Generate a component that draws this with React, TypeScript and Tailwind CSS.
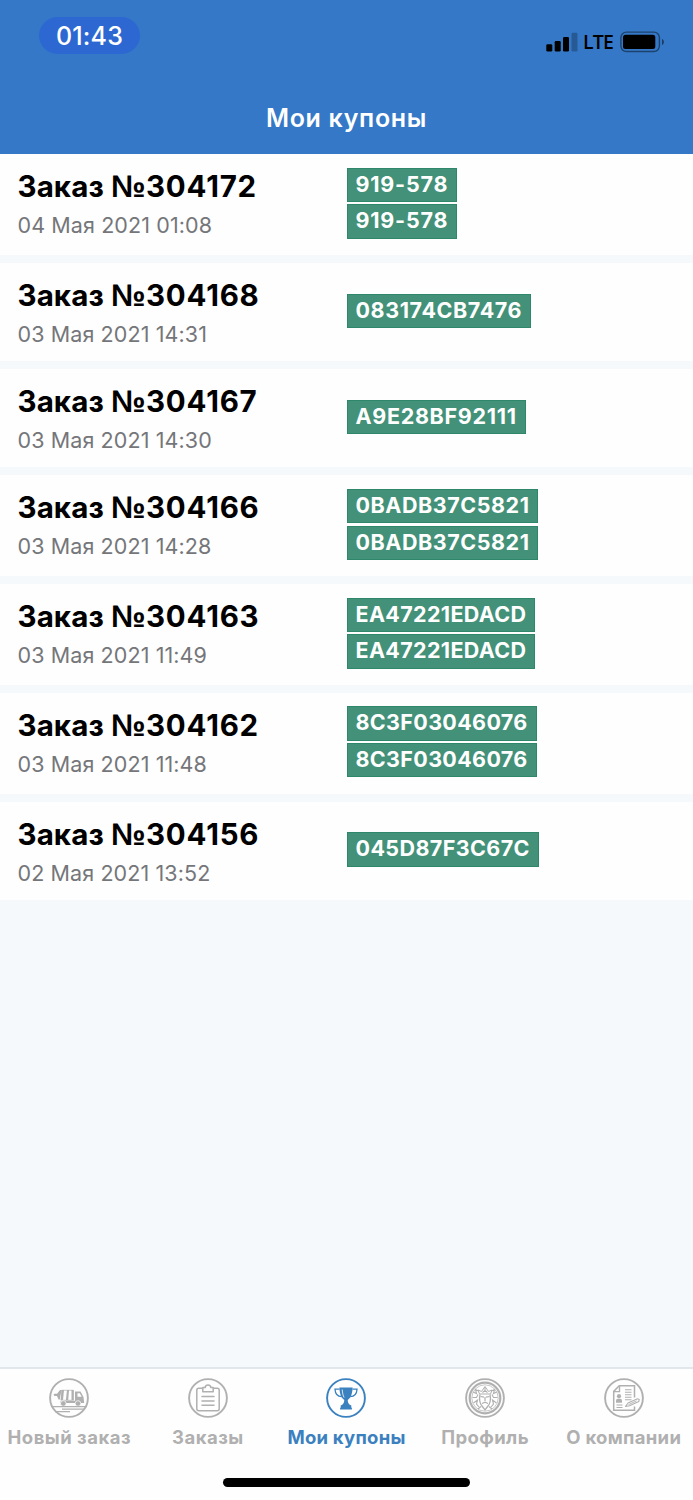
import type { ReactNode } from "react";

type Order = {
  id: string;
  date: string;
  coupons: string[];
  spacing: string;
};

const orders: Order[] = [
  { id: "304172", date: "04 Мая 2021 01:08", coupons: ["919-578", "919-578"], spacing: "tracking-[0.8px]" },
  { id: "304168", date: "03 Мая 2021 14:31", coupons: ["083174CB7476"], spacing: "tracking-[0.6px]" },
  { id: "304167", date: "03 Мая 2021 14:30", coupons: ["A9E28BF92111"], spacing: "tracking-[0.7px]" },
  { id: "304166", date: "03 Мая 2021 14:28", coupons: ["0BADB37C5821", "0BADB37C5821"], spacing: "tracking-[0.55px]" },
  { id: "304163", date: "03 Мая 2021 11:49", coupons: ["EA47221EDACD", "EA47221EDACD"], spacing: "tracking-[0.35px]" },
  { id: "304162", date: "03 Мая 2021 11:48", coupons: ["8C3F03046076", "8C3F03046076"], spacing: "tracking-[0.35px]" },
  { id: "304156", date: "02 Мая 2021 13:52", coupons: ["045D87F3C67C"], spacing: "tracking-[0.4px]" },
];

const RoundIcon = ({ children }: { children: ReactNode }) => (
  <svg width="40" height="40" viewBox="0 0 40 40" fill="none" stroke="currentColor" strokeWidth="1">
    <circle cx="20" cy="20" r="18.9" strokeWidth="1.9" />
    {children}
  </svg>
);

const TruckIcon = () => (
  <RoundIcon>
    <path d="M4.500 16.500l1-.8h2.500l3-3.700h1.500l-1.700 9.500h-1.300l-1.500-3.500H5.500z" fill="currentColor" stroke="none" />
    <path d="M12.500 12.300h12v10h-12z" strokeWidth="0.700" />
    <path d="M13 12h2l-1 10h-2.500zM18 12h2l-.8 10h-2.300zM22.500 12h2v10h-2z" fill="currentColor" stroke="none" />
    <path d="M26 13.500h5.500l3 5.500.7 6H11.500v-2.300H26z" fill="currentColor" stroke="none" />
    <path d="M28.500 15.300h2.200l2 3.500h-4.200z" fill="#fff" stroke="none" />
    <circle cx="14.300" cy="25.500" r="2.800" fill="currentColor" stroke="#fff" strokeWidth="0.700" />
    <circle cx="29" cy="25.500" r="2.800" fill="currentColor" stroke="#fff" strokeWidth="0.700" />
    <path d="M2.500 28.600h35M13 31.200h23M6 33.600h15" strokeWidth="1.300" />
  </RoundIcon>
);

const ClipboardIcon = () => (
  <RoundIcon>
    <path d="M14.500 10.200h-3.700a2 2 0 0 0-2 2v18.600a2 2 0 0 0 2 2h18.400a2 2 0 0 0 2-2V12.200a2 2 0 0 0-2-2h-3.700" strokeWidth="1.500" />
    <path d="M14.800 13.800V9.500h2.300c.6-3.500 5.200-3.500 5.800 0h2.300v4.300z" strokeWidth="1.500" strokeLinejoin="round" />
    <path d="M14 18.600h12M14 23h12M14 27.300h12" strokeWidth="1.500" strokeLinecap="round" />
  </RoundIcon>
);

const TrophyIcon = () => (
  <RoundIcon>
    <path
      d="M13.400 9.500h13.200c-.2 6-1.700 10.500-4.900 12.400.1 3 1.200 4.400 3.600 5.600v2.200h.6v1.800H14.100v-1.800h.6v-2.200c2.400-1.200 3.500-2.600 3.600-5.600-3.200-1.900-4.700-6.400-4.900-12.400z"
      fill="currentColor"
      stroke="none"
    />
    <path d="M13.500 11.200H9c.2 4.500 2.800 7.300 6.800 7.500M26.500 11.200H31c-.2 4.500-2.800 7.300-6.800 7.500" strokeWidth="1.300" />
    <path d="M16.200 11.500c.3 3.500.8 6 1.900 8" stroke="#fff" strokeWidth="0.800" />
  </RoundIcon>
);

const EmblemIcon = () => (
  <RoundIcon>
    <circle cx="20" cy="20" r="15.300" strokeWidth="2.200" />
    <circle cx="20" cy="20" r="13.200" strokeWidth="0.700" />
    <path d="M14.500 16l-1.500-4 3.500 1.500L20 8.500l3.500 5L27 12l-1.500 4z" strokeWidth="1" />
    <path d="M20 9v5M17.500 14.500l2.500-2 2.500 2" strokeWidth="1.100" />
    <path d="M15 16.500c-1 5-.2 9 2 11.500l3 4 3-4c2.200-2.500 3-6.500 2-11.500" strokeWidth="1.300" />
    <path d="M15.500 18.500l3.500.7M24.500 18.500l-3.500.7M20 19v4M17 25.500l3-1.300 3 1.300" strokeWidth="1.200" />
    <path d="M8 14l3.500 1.500-1-4 3 1.500M32 14l-3.500 1.500 1-4-3 1.500M7.500 19.500h4l1.500-3M32.500 19.500h-4l-1.500-3M8.500 25l4-3-1 4 2.500 3M31.500 25l-4-3 1 4-2.500 3M13 31l3-2.500M27 31l-3-2.500" strokeWidth="1.100" />
  </RoundIcon>
);

const DocumentIcon = () => (
  <RoundIcon>
    <path d="M30.500 19.500V7.800H15.200L9.700 13.400v18.900h20.800V28.500" strokeWidth="1.500" />
    <path d="M15.500 8v5.600H10" strokeWidth="1.400" />
    <circle cx="15" cy="18.200" r="2.100" fill="currentColor" stroke="none" />
    <path d="M12 24.800v-2.300q0-1.700 1.800-1.700h2.400q1.800 0 1.800 1.700v2.300z" fill="currentColor" stroke="none" />
    <path d="M21 11.800h6.500M21 14.300h6.500M21 16.800h6.500M21 19.300h6.500M21 21.800h6.500M12.500 27h6M12.500 29.500h6" strokeWidth="1.100" />
    <path d="M21.500 28.500l2.500-3.500 9.500-4.200 1.800.6-.5 2-9.300 4.300z" fill="#fff" strokeWidth="1.100" strokeLinejoin="round" />
    <path d="M24.500 26.600l8-3.700" strokeWidth="0.900" />
  </RoundIcon>
);

const tabs = [
  { label: "Новый заказ", icon: <TruckIcon />, spacing: "tracking-[0.5px]", active: false },
  { label: "Заказы", icon: <ClipboardIcon />, spacing: "tracking-[0.5px]", active: false },
  { label: "Мои купоны", icon: <TrophyIcon />, spacing: "tracking-[0.25px]", active: true },
  { label: "Профиль", icon: <EmblemIcon />, spacing: "tracking-[0.4px]", active: false },
  { label: "О компании", icon: <DocumentIcon />, spacing: "tracking-[0.3px]", active: false },
];

const SignalIcon = () => (
  <svg width="32" height="20" viewBox="0 0 32 20">
    <rect x="0.300" y="12.200" width="6" height="7.300" rx="1.300" />
    <rect x="8.700" y="9" width="6" height="10.500" rx="1.300" />
    <rect x="17" y="5" width="6" height="14.500" rx="1.300" />
    <rect x="25.500" y="0.700" width="6" height="18.800" rx="1.300" opacity="0.250" />
  </svg>
);

const BatteryIcon = () => (
  <svg width="45" height="22" viewBox="0 0 45 22">
    <rect x="0.900" y="1.100" width="38.500" height="19.400" rx="5.500" fill="none" stroke="#000" strokeOpacity="0.450" strokeWidth="1.400" />
    <rect x="3" y="3.700" width="32.300" height="14.300" rx="2.500" />
    <path d="M42 7.800c2.500 1.500 2.500 5 0 6.500z" opacity="0.500" />
  </svg>
);

export default function App() {
  return (
    <div className="flex h-[1500px] w-[693px] flex-col overflow-hidden bg-[#f5f9fc] font-['Inter',sans-serif]">
      <header className="h-[154px] shrink-0 bg-[#3478c7]">
        <div className="flex h-[84px] items-start justify-between pl-[39px] pr-[28px]">
          <div className="mt-[17px] flex h-[37px] w-[101px] items-center justify-center rounded-full bg-[#2d68d2] pt-[2px] text-[25px] font-medium tracking-[0.2px] text-white">
            01:43
          </div>
          <div className="mt-[31px] flex h-[22px] items-center">
            <SignalIcon />
            <span className="ml-[5px] w-[31px] whitespace-nowrap font-['Open_Sans'] text-[19.5px] font-semibold leading-[22px] tracking-[-0.8px]">
              LTE
            </span>
            <span className="ml-[6px]">
              <BatteryIcon />
            </span>
          </div>
        </div>
        <h1 className="mt-[19px] text-center text-[25px] font-semibold leading-[30px] tracking-[0.7px] text-white">
          Мои купоны
        </h1>
      </header>

      <main className="flex flex-1 flex-col gap-[8px]">
        {orders.map((order) => (
          <section
            key={order.id}
            className={`flex bg-[#fefefe] pl-[17.5px] ${order.coupons.length > 1 ? "h-[100.8px]" : "h-[98.2px]"}`}
          >
            <div className="w-[329px] pt-[14px]">
              <h2 className="whitespace-nowrap text-[29.5px] font-bold leading-[36px] tracking-[0.1px] text-black">
                Заказ <span className="font-['Liberation_Sans'] text-[31px] leading-none tracking-[0.5px]">№</span>
                <span className="tracking-[0.8px]">{order.id}</span>
              </h2>
              <p className="mt-[7px] text-[21.5px] leading-[28px] tracking-[0.1px] text-[#75767a]">{order.date}</p>
            </div>
            <div className="flex flex-col items-start justify-center">
              {order.coupons.map((code, i) => (
                <span
                  key={i}
                  className={`mb-[2.5px] h-[34.2px] border border-[#2e8769] bg-[#439178] px-[8px] text-[21.5px] font-bold leading-[31.5px] text-white ${order.spacing}`}
                >
                  {code}
                </span>
              ))}
            </div>
          </section>
        ))}
      </main>

      <footer className="h-[133px] shrink-0 border-t-2 border-[#e2e7ec] bg-[#fefefe]">
        <nav className="grid grid-cols-5 pt-[9px]">
          {tabs.map((tab) => (
            <div
              key={tab.label}
              className={`flex flex-col items-center ${tab.active ? "text-[#3b80bf]" : "text-[#b0b0b0]"}`}
            >
              {tab.icon}
              <span className={`mt-[7px] whitespace-nowrap text-[18.5px] font-bold leading-[24px] ${tab.spacing}`}>
                {tab.label}
              </span>
            </div>
          ))}
        </nav>
        <div className="mx-auto mt-[29px] h-[9px] w-[247px] rounded-full bg-black" />
      </footer>
    </div>
  );
}
